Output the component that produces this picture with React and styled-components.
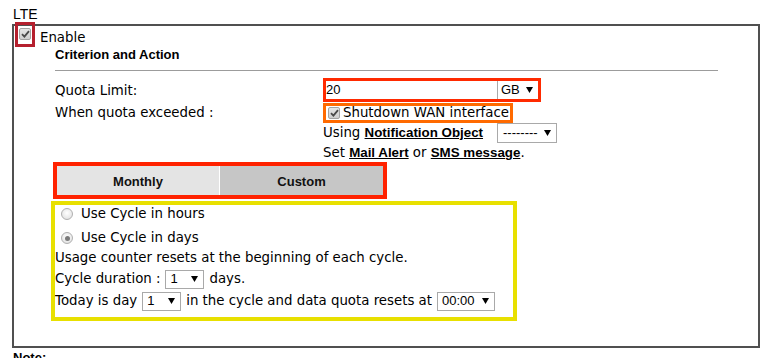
import React from "react";
import styled, { createGlobalStyle } from "styled-components";

const Global = createGlobalStyle`
  html, body { margin: 0; padding: 0; background: #fff; }
  body { font-family: "DejaVu Sans", Verdana, sans-serif; font-size: 13.33px; color: #000; }
`;

const Page = styled.div`
  padding: 4px 0 0 12px;
  width: 748px;
`;

const Title = styled.div`
  font-family: "Liberation Sans", Arial, sans-serif;
  font-size: 14px;
  line-height: 20px;
  height: 20px;
  padding-left: 1px;
`;

const Box = styled.div`
  box-sizing: border-box;
  border: 2px solid #505050;
  height: 324px;
`;

const EnableRow = styled.div`
  display: flex;
  align-items: flex-start;
  margin: -4px 0 0 1px;
  height: 25px;
`;

const Outline = styled.div`
  box-sizing: border-box;
  border: ${(p) => p.$w || 3}px solid ${(p) => p.$c};
  display: flex;
  align-items: center;
`;

const EnableMark = styled(Outline)`
  width: 20px;
  height: 25px;
  justify-content: center;
  padding-bottom: 1px;
`;

const EnableText = styled.span`
  margin: 8px 0 0 5px;
  line-height: 16px;
`;

const Section = styled.div`
  margin-left: 41px;
  width: 663px;
`;

const Heading = styled.div`
  font-family: "Liberation Sans", Arial, sans-serif;
  font-weight: bold;
  font-size: 13px;
  line-height: 14px;
  height: 14px;
  margin-top: 1px;
`;

const Rule = styled.div`
  margin-top: 8px;
  border-top: 1px solid #9c9c9c;
`;

const Row = styled.div`
  display: grid;
  grid-template-columns: 268px 1fr;
  align-items: center;
  height: ${(p) => p.$h}px;
  margin-top: ${(p) => p.$mt || 0}px;
`;

const Label = styled.span`
  line-height: 16px;
  white-space: nowrap;
  padding-top: ${(p) => p.$pt || 0}px;
`;

const Cell = styled.div`
  display: flex;
  align-items: center;
  white-space: nowrap;
  line-height: 16px;
`;

const QuotaFrame = styled(Outline)`
  width: 218px;
  height: 24px;
`;

const TextInput = styled.div`
  flex: 1;
  height: 18px;
  background: #fff;
  font-family: "Liberation Sans", Arial, sans-serif;
  font-size: 13px;
  line-height: 18px;
`;

const Select = styled.div`
  box-sizing: border-box;
  display: inline-flex;
  align-items: center;
  justify-content: space-between;
  width: ${(p) => p.$w}px;
  height: ${(p) => p.$h || 19}px;
  border: 1px solid #a9a9a9;
  ${(p) => (p.$left ? "border-width: 0 0 0 1px;" : "")}
  background: #fff;
  font-family: "Liberation Sans", Arial, sans-serif;
  font-size: 13px;
  padding: 0 5px 0 ${(p) => p.$pl || 4}px;
  margin: ${(p) => p.$m || "0"};
`;

const ShutFrame = styled(Outline)`
  width: 190px;
  height: 20px;
  padding-left: 2px;
  gap: 3px;
`;

const Strong = styled.a`
  font-family: "Liberation Sans", Arial, sans-serif;
  font-weight: bold;
  font-size: 13.33px;
  color: #000;
  text-decoration: underline;
`;

const TabFrame = styled.div`
  box-sizing: border-box;
  width: 334px;
  height: 37px;
  margin: -1px 0 0 -2px;
  border: 4px solid #ff2200;
  display: grid;
  grid-template-columns: 162px 1fr;
  gap: 1px;
  background: #fff;
`;

const Tab = styled.div`
  display: flex;
  align-items: center;
  justify-content: center;
  padding-top: 1px;
  background: ${(p) => (p.$active ? "#c6c6c6" : "#e4e4e4")};
  font-family: "Liberation Sans", Arial, sans-serif;
  font-weight: bold;
  font-size: 13px;
  color: #111;
`;

const CycleFrame = styled.div`
  box-sizing: border-box;
  width: 466px;
  height: 120px;
  margin: 2px 0 0 -4px;
  padding-top: 1px;
  border: 4px solid #e8e000;
  display: flex;
  flex-direction: column;
`;

const CycleRow = styled.div`
  display: flex;
  align-items: center;
  white-space: nowrap;
  height: ${(p) => p.$h || 20}px;
  margin-top: ${(p) => p.$mt || 0}px;
  line-height: 16px;
`;

const Note = styled.div`
  font-family: "Liberation Sans", Arial, sans-serif;
  font-size: 13px;
  font-weight: bold;
  margin: 2px 0 0 1px;
  line-height: 16px;
`;

const CheckBox = styled.span`
  box-sizing: border-box;
  display: inline-flex;
  align-items: center;
  justify-content: center;
  width: 12px;
  height: 12px;
  flex: none;
  border: 1px solid #a3a3a3;
  border-radius: 2px;
  background: linear-gradient(#e6e6e6, #cfcfcf);
`;

const RadioDot = styled.span`
  box-sizing: border-box;
  display: inline-flex;
  align-items: center;
  justify-content: center;
  width: 12px;
  height: 12px;
  flex: none;
  border: 1px solid #b0b0b0;
  border-radius: 50%;
  background: radial-gradient(circle at 50% 40%, #ffffff, #dcdcdc);
  margin: 0 8px 0 6px;
  &::after {
    content: "";
    display: ${(p) => (p.$on ? "block" : "none")};
    width: 5px;
    height: 5px;
    border-radius: 50%;
    background: #7a7a7a;
  }
`;

const Check = () => (
  <CheckBox>
    <svg width="9" height="8" viewBox="0 0 9 8">
      <path d="M1 4.2 L3.4 6.6 L8 1.2" fill="none" stroke="#4a4a4a" strokeWidth="1.8" />
    </svg>
  </CheckBox>
);

const Arrow = () => (
  <svg width="7" height="6" viewBox="0 0 7 6">
    <polygon points="0,0 7,0 3.5,6" fill="#000" />
  </svg>
);

export default function App() {
  return (
    <>
      <Global />
      <Page>
        <Title>LTE</Title>
        <Box>
          <EnableRow>
            <EnableMark $c="#b5202e">
              <Check />
            </EnableMark>
            <EnableText>Enable</EnableText>
          </EnableRow>
          <Section>
            <Heading>Criterion and Action</Heading>
            <Rule />
            <Row $h={24} $mt={7}>
              <Label $pt={2}>Quota Limit:</Label>
              <Cell>
                <QuotaFrame $c="#ff2a00">
                  <TextInput>20</TextInput>
                  <Select $w={41} $h={18} $left $pl={3}>
                    GB <Arrow />
                  </Select>
                </QuotaFrame>
              </Cell>
            </Row>
            <Row $h={20} $mt={1}>
              <Label>When quota exceeded :</Label>
              <Cell>
                <ShutFrame $c="#ff6a00">
                  <Check />
                  <span>Shutdown WAN interface</span>
                </ShutFrame>
              </Cell>
            </Row>
            <Row $h={20}>
              <span />
              <Cell>
                Using&nbsp;<Strong>Notification Object</Strong>
                <Select $w={60} $h={20} $m="0 0 0 14px" $pl={5}>
                  -------- <Arrow />
                </Select>
              </Cell>
            </Row>
            <Row $h={20}>
              <span />
              <Cell>
                Set&nbsp;<Strong>Mail Alert</Strong>&nbsp;or&nbsp;<Strong>SMS message</Strong>.
              </Cell>
            </Row>
            <TabFrame>
              <Tab>Monthly</Tab>
              <Tab $active>Custom</Tab>
            </TabFrame>
            <CycleFrame>
              <CycleRow $h={15}>
                <RadioDot />
                Use Cycle in hours
              </CycleRow>
              <CycleRow $mt={7}>
                <RadioDot $on />
                Use Cycle in days
              </CycleRow>
              <CycleRow>Usage counter resets at the beginning of each cycle.</CycleRow>
              <CycleRow $mt={1}>
                Cycle duration :
                <Select $w={39} $h={19} $m="0 5px 0 5px">
                  1 <Arrow />
                </Select>
                days.
              </CycleRow>
              <CycleRow $mt={2}>
                Today is day
                <Select $w={39} $h={19} $m="0 5px 0 5px">
                  1 <Arrow />
                </Select>
                in the cycle and data quota resets at
                <Select $w={58} $h={19} $m="0 0 0 5px">
                  00:00 <Arrow />
                </Select>
              </CycleRow>
            </CycleFrame>
          </Section>
        </Box>
        <Note>Note:</Note>
      </Page>
    </>
  );
}
